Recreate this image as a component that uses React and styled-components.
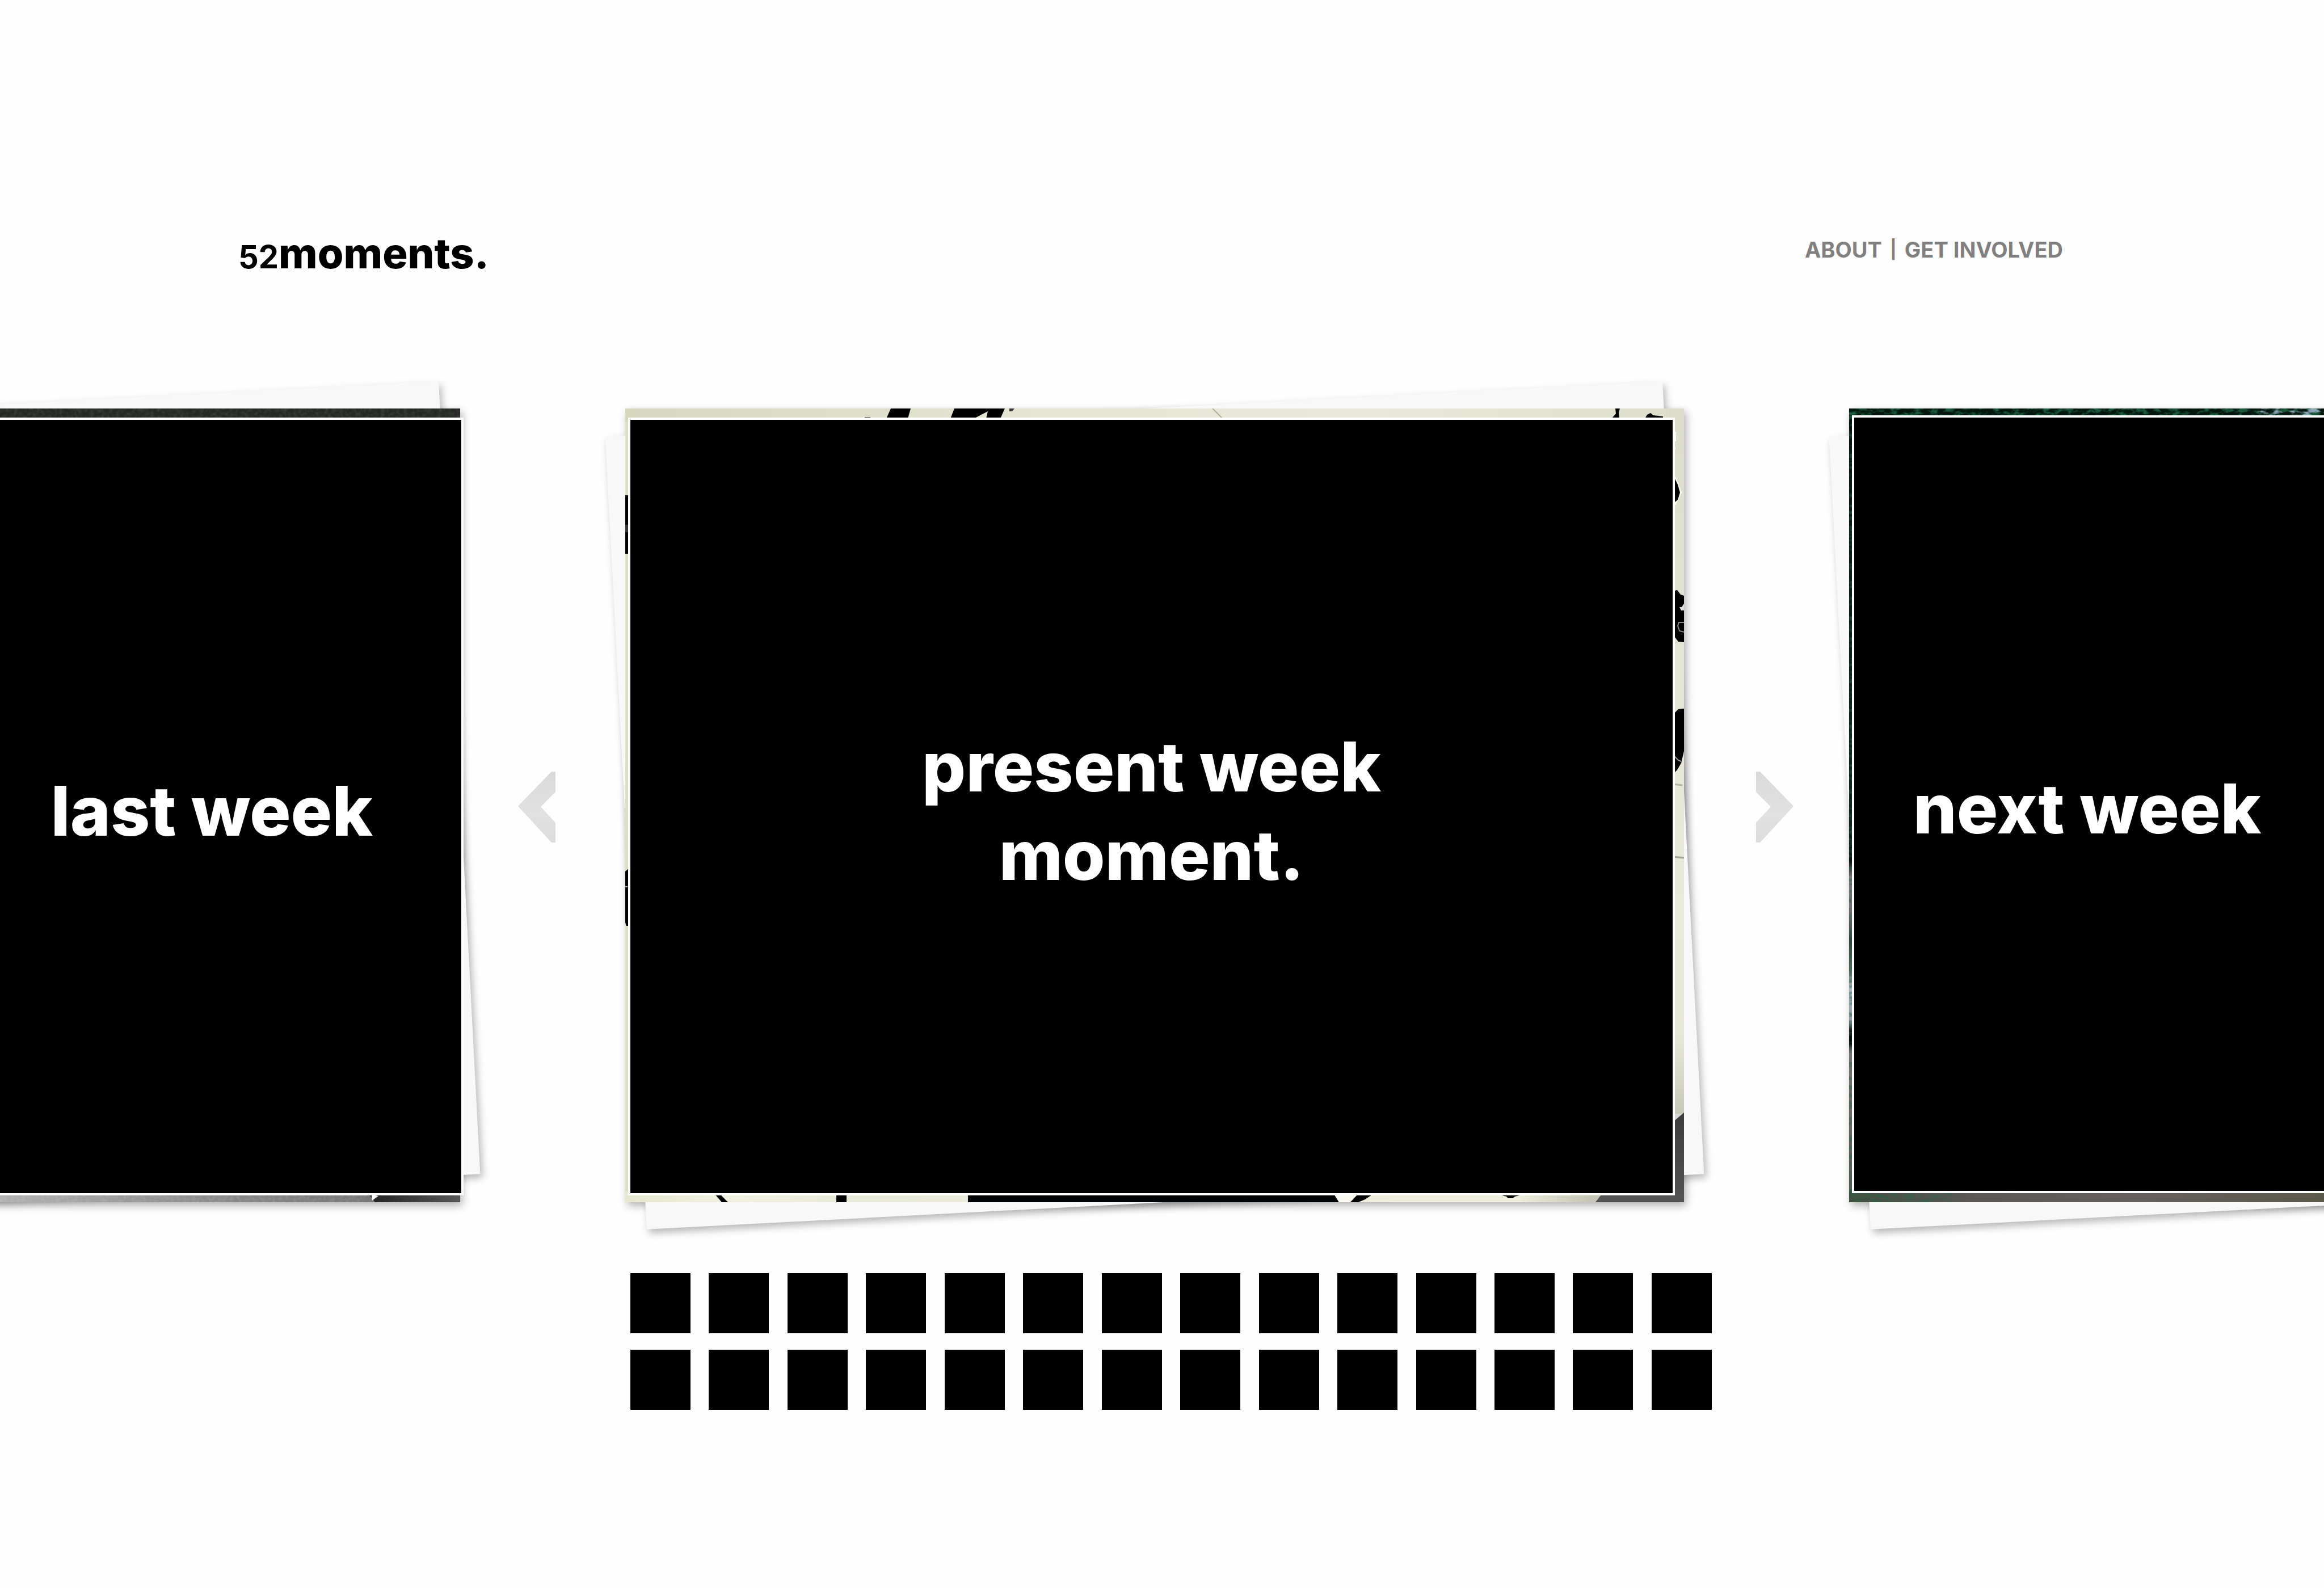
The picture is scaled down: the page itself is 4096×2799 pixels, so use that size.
import React from "react";
import styled, { createGlobalStyle, css } from "styled-components";

const GlobalStyle = createGlobalStyle`
  *, *::before, *::after { box-sizing: border-box; }
  body {
    margin: 0;
    background: #fefefe;
    color: #000;
    font-family: Inter, "Open Sans", sans-serif;
  }
`;

const Page = styled.div`
  --card: min(1866px, 46vw);
  --gutter: min(291px, 8vw);
  overflow: hidden;
  min-height: 100vh;
`;

const Header = styled.header`
  display: flex;
  align-items: flex-start;
  justify-content: space-between;
  height: 720px;
  padding: 396px 460px 0 420px;
`;

const Logo = styled.a`
  color: #000;
  font-size: 74px;
  font-weight: 800;
  line-height: 100px;
  text-decoration: none;
`;

const LogoNumber = styled.span`
  font-size: 56px;
  font-weight: 700;
`;

const Nav = styled.nav`
  display: flex;
  gap: 14px;
  padding-top: 20px;
  color: #808080;
  font-size: 38px;
  font-weight: 700;
  line-height: 48px;
`;

const NavLink = styled.a`
  color: inherit;
  text-decoration: none;
`;

const NavDivider = styled.span`
  font-size: 32px;
`;

const columns = css`
  display: grid;
  grid-template-columns:
    minmax(0, 811fr) var(--gutter) var(--card) var(--gutter)
    minmax(0, 837fr);
`;

const Carousel = styled.main`
  ${columns}
`;

const Slide = styled.section`
  position: relative;
  z-index: 0;
  display: flex;
  width: var(--card);
  aspect-ratio: 1866 / 1399;
  justify-self: ${(p) => p.$side};
  padding: ${(p) => p.$inset};
  box-shadow: 4px 6px 14px rgba(0, 0, 0, 0.3);

  &::before {
    content: "";
    position: absolute;
    z-index: -2;
    inset: 0;
    background: #f8f8f8;
    box-shadow: 4px 7px 14px rgba(0, 0, 0, 0.28);
    transform: rotate(-3deg);
  }
`;

const Photo = styled.svg`
  position: absolute;
  z-index: -1;
  inset: 0;
  width: 100%;
  height: 100%;
`;

const Panel = styled.div`
  flex: 1;
  display: flex;
  align-items: center;
  justify-content: ${(p) => p.$align};
  margin-right: ${(p) => p.$bleed || "0"};
  padding: 14px ${(p) => p.$end || "0"} 0 ${(p) => p.$start || "0"};
  border: 4px solid #fff;
  background: #000;
`;

const Title = styled.h2`
  margin: 0;
  color: #fff;
  font-size: 121px;
  font-weight: 800;
  line-height: 156px;
  text-align: center;
`;

const ArrowCell = styled.div`
  display: flex;
  align-items: center;
  justify-content: ${(p) => p.$side};
  padding: 6px 98px 0 102px;
`;

const ArrowButton = styled.button`
  flex: none;
  display: flex;
  padding: 0;
  border: 0;
  background: none;
  cursor: pointer;
`;

const Weeks = styled.nav`
  ${columns}
  margin-top: 125px;
`;

const WeekGrid = styled.div`
  grid-column: 3;
  display: grid;
  grid-template-columns: repeat(14, 106px);
  justify-content: space-between;
  row-gap: 29px;
  margin: 0 -49px 0 9px;
`;

const Week = styled.button`
  height: 106px;
  padding: 0;
  border: 0;
  background: #000;
  cursor: pointer;
`;

function Arrow({ flip, label }) {
  const id = flip ? "arrowNext" : "arrowPrev";
  return (
    <ArrowButton aria-label={label}>
      <svg width="66" height="125" viewBox="0 0 66 125">
        <defs>
          <linearGradient id={id} x1="0" y1="0" x2="0" y2="1">
            <stop offset="0" stopColor="#dadada" />
            <stop offset="0.6" stopColor="#e1e1e1" />
            <stop offset="1" stopColor="#dcdcdc" />
          </linearGradient>
        </defs>
        <path
          d="M59 0H66V36L40 62L66 90V125H59L0 61Z"
          fill={`url(#${id})`}
          transform={flip ? "translate(66 0) scale(-1 1)" : undefined}
        />
      </svg>
    </ArrowButton>
  );
}

function LastPhoto() {
  return (
    <Photo viewBox="0 0 1866 1399" preserveAspectRatio="none" aria-hidden="true">
      <defs>
        <linearGradient id="lastFloor" x1="0" x2="1" y1="0" y2="0">
          <stop offset="0.55" stopColor="#b4b4b4" />
          <stop offset="0.8" stopColor="#858585" />
          <stop offset="1" stopColor="#6e6e6e" />
        </linearGradient>
        <linearGradient id="lastShade" x1="0" x2="1" y1="0" y2="0">
          <stop offset="0" stopColor="#222" />
          <stop offset="1" stopColor="#585858" />
        </linearGradient>
        <filter id="lastGrain" x="0" y="0" width="100%" height="100%">
          <feTurbulence type="fractalNoise" baseFrequency="0.15" numOctaves="2" seed="4" />
          <feColorMatrix values="0 0 0 0 1  0 0 0 0 1  0 0 0 0 1  1 0 0 0 -0.38" />
        </filter>
      </defs>
      <rect width="1866" height="1399" fill="#262826" />
      <rect y="1370" width="1866" height="29" fill="url(#lastFloor)" />
      <path d="M1706 1386H1866V1399H1716Z" fill="url(#lastShade)" />
      <path d="M1710 1386L1722 1388L1711 1396Z" fill="#fff" />
      <rect width="1866" height="17" filter="url(#lastGrain)" opacity="0.2" />
      <rect y="1384" width="1700" height="15" filter="url(#lastGrain)" opacity="0.25" />
    </Photo>
  );
}

function PresentPhoto() {
  return (
    <Photo viewBox="0 0 1866 1399" preserveAspectRatio="none" aria-hidden="true">
      <defs>
        <linearGradient id="paperTop" x1="0" x2="1" y1="0" y2="0">
          <stop offset="0" stopColor="#d6d8be" />
          <stop offset="0.35" stopColor="#e3e4d1" />
          <stop offset="0.7" stopColor="#e8e9d9" />
          <stop offset="1" stopColor="#dddec9" />
        </linearGradient>
        <linearGradient id="paperSide" x1="0" x2="0" y1="0" y2="1">
          <stop offset="0" stopColor="#dcdcc8" />
          <stop offset="0.3" stopColor="#e4e5d2" />
          <stop offset="0.65" stopColor="#e9ebd9" />
          <stop offset="0.8" stopColor="#e5e7d4" />
          <stop offset="0.89" stopColor="#c6c7b7" />
        </linearGradient>
        <linearGradient id="paperLow" x1="0" x2="1" y1="0" y2="0">
          <stop offset="0" stopColor="#e6e7cf" />
          <stop offset="0.1" stopColor="#f1f1e1" />
          <stop offset="0.2" stopColor="#e9ebda" />
          <stop offset="0.75" stopColor="#efeedd" />
          <stop offset="0.85" stopColor="#eeeedd" />
          <stop offset="0.92" stopColor="#c5c5b6" />
        </linearGradient>
        <linearGradient id="coat" x1="0" x2="0" y1="0" y2="1">
          <stop offset="0" stopColor="#3c3c3c" />
          <stop offset="1" stopColor="#545454" />
        </linearGradient>
      </defs>
      <rect width="1866" height="1399" fill="#dcdec5" />
      <rect width="1866" height="24" fill="url(#paperTop)" />
      <rect x="1840" width="26" height="1399" fill="url(#paperSide)" />
      <rect y="1380" width="1850" height="19" fill="url(#paperLow)" />
      <path d="M468 0H503L498 18H460Z" />
      <path d="M580 0H669L661 18H636L639 5L614 18H573Z" />
      <path d="M677 0H686L682 5H677Z" fill="#383838" />
      <path d="M422 15H432V18H422Z" fill="#444" />
      <path d="M1035 0L1053 18" stroke="#b3ad9b" strokeWidth="2" />
      <path d="M1745 0H1753L1751 7L1752 18H1738L1746 9Z" />
      <path d="M1797 18L1801 11L1807 8L1812 12L1829 14V18Z" />
      <path d="M1686 16H1702V18H1686Z" />
      <path d="M1849 40L1852 42V58H1849ZM1849 68H1851V72H1849Z" fill="#fbfbef" />
      <path d="M1846 114L1853 124L1862 148L1852 170H1846Z" fill="#fbfbef" />
      <path d="M1846 119L1850 124L1855 134L1859 148L1855 161L1846 168Z" />
      <path d="M1846 322L1854 320L1860 328L1866 330V412L1856 411L1846 398Z" />
      <path d="M1866 344L1862 350H1858L1861 356H1866Z" fill="#ddd" />
      <path d="M1866 377H1857L1855 383L1858 392L1866 394" fill="none" stroke="#888" strokeWidth="2" />
      <path d="M1846 540L1856 530L1866 529V604L1861 625L1854 637L1846 645Z" />
      <path d="M1849 613L1856 620L1861 622" fill="none" stroke="#999" strokeWidth="2" />
      <path d="M1846 662L1863 664" stroke="#b5b6a5" strokeWidth="3" />
      <path d="M1846 790L1866 792" stroke="#a3a494" strokeWidth="3" />
      <path d="M1846 1243H1866L1846 1258Z" fill="#d6d6d2" />
      <path d="M1846 1258L1866 1241V1399H1710L1720 1386L1846 1380Z" fill="url(#coat)" />
      <path d="M0 153H7V256H0Z" />
      <path d="M0 205H7V218H0Z" fill="#333" />
      <path d="M7 810V912H2L0 906V816Z" />
      <path d="M0 843H4" stroke="#aaa" strokeWidth="2" />
      <path d="M159 1386H168L181 1399H170Z" />
      <path d="M372 1386H390V1399H372Z" />
      <path d="M604 1386H1250L1258 1399H604Z" fill="#020305" />
      <path d="M1250 1386H1296L1278 1399H1258Z" fill="#fafaf0" />
      <path d="M1290 1386H1316L1304 1394L1292 1399H1278Z" />
      <path d="M1541 1386H1580L1568 1389L1564 1392H1556L1553 1389Z" />
    </Photo>
  );
}

function NextPhoto() {
  return (
    <Photo viewBox="0 0 1866 1399" preserveAspectRatio="none" aria-hidden="true">
      <defs>
        <linearGradient id="hedge" x1="0" x2="0" y1="0" y2="1">
          <stop offset="0" stopColor="#04170f" />
          <stop offset="0.5" stopColor="#0a2a1d" />
          <stop offset="0.57" stopColor="#0b1511" />
          <stop offset="0.59" stopColor="#77737c" />
          <stop offset="0.64" stopColor="#6d6b72" />
          <stop offset="0.67" stopColor="#2c4437" />
          <stop offset="0.71" stopColor="#50705f" />
          <stop offset="0.73" stopColor="#a5b9c4" />
          <stop offset="0.77" stopColor="#8c9ba6" />
          <stop offset="0.785" stopColor="#0a120e" />
          <stop offset="0.8" stopColor="#0a120e" />
          <stop offset="0.81" stopColor="#77726f" />
          <stop offset="0.9" stopColor="#6b6a62" />
          <stop offset="1" stopColor="#4d5a4d" />
        </linearGradient>
        <linearGradient id="path" x1="0" x2="0.45" y1="0" y2="0">
          <stop offset="0" stopColor="#41503f" />
          <stop offset="0.25" stopColor="#5a5757" />
          <stop offset="0.6" stopColor="#65605f" />
          <stop offset="1" stopColor="#5b5949" />
        </linearGradient>
        <filter id="leaves" x="0" y="0" width="100%" height="100%" colorInterpolationFilters="sRGB">
          <feTurbulence type="fractalNoise" baseFrequency="0.07 0.14" numOctaves="3" seed="9" />
          <feColorMatrix values="0 0 0 0 0.12  0 0 0 0 0.42  0 0 0 0 0.28  4 0 0 0 -1.8" />
        </filter>
        <filter id="sky" x="0" y="0" width="100%" height="100%" colorInterpolationFilters="sRGB">
          <feTurbulence type="fractalNoise" baseFrequency="0.05 0.12" numOctaves="3" seed="3" />
          <feColorMatrix values="0 0 0 0 0.68  0 0 0 0 0.76  0 0 0 0 0.86  5 0 0 0 -2.3" />
        </filter>
      </defs>
      <rect width="1866" height="1399" fill="url(#hedge)" />
      <rect width="1866" height="18" fill="#04170f" />
      <rect width="1866" height="18" filter="url(#leaves)" opacity="0.8" />
      <rect x="720" width="150" height="18" filter="url(#sky)" opacity="0.8" />
      <rect width="10" height="1399" filter="url(#leaves)" opacity="0.5" />
      <rect y="1380" width="1866" height="19" fill="url(#path)" />
      <rect y="1380" width="180" height="19" filter="url(#leaves)" opacity="0.4" />
    </Photo>
  );
}

const weeks = Array.from({ length: 28 }, (_, i) => i + 1);

export default function App() {
  return (
    <>
      <GlobalStyle />
      <Page>
        <Header>
          <Logo href="#home">
            <LogoNumber>52</LogoNumber>moments.
          </Logo>
          <Nav aria-label="Site">
            <NavLink href="#about">ABOUT</NavLink>
            <NavDivider>|</NavDivider>
            <NavLink href="#get-involved">GET INVOLVED</NavLink>
          </Nav>
        </Header>

        <Carousel>
          <Slide $side="end" $inset="16px 0 12px">
            <LastPhoto />
            <Panel $align="flex-end" $bleed="-6px" $end="156px">
              <Title>last week</Title>
            </Panel>
          </Slide>
          <ArrowCell $side="flex-start">
            <Arrow label="Previous week" />
          </ArrowCell>
          <Slide $side="center" $inset="16px 16px 12px 5px">
            <PresentPhoto />
            <Panel $align="center">
              <Title>
                present week
                <br />
                moment.
              </Title>
            </Panel>
          </Slide>
          <ArrowCell $side="flex-end">
            <Arrow flip label="Next week" />
          </ArrowCell>
          <Slide $side="start" $inset="12px 0 16px 5px">
            <NextPhoto />
            <Panel $align="flex-start" $start="104px">
              <Title>next week</Title>
            </Panel>
          </Slide>
        </Carousel>

        <Weeks aria-label="Weeks">
          <WeekGrid>
            {weeks.map((week) => (
              <Week key={week} aria-label={`Week ${week}`} />
            ))}
          </WeekGrid>
        </Weeks>
      </Page>
    </>
  );
}
